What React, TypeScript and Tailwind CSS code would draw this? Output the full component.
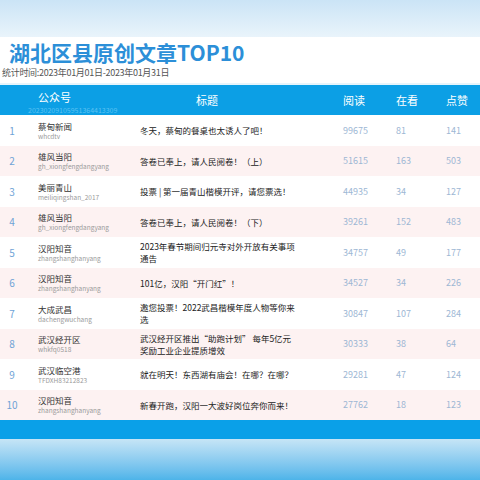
const rows = [
  { name: '蔡甸新闻', id: 'whcdtv', title: '冬天，蔡甸的餐桌也太诱人了吧！', read: 99675, seen: 81, like: 141 },
  { name: '雄风当阳', id: 'gh_xiongfengdangyang', title: '答卷已奉上，请人民阅卷！（上）', read: 51615, seen: 163, like: 503 },
  { name: '美丽青山', id: 'meiliqingshan_2017', title: '投票 | 第一届青山楷模开评，请您票选！', read: 44935, seen: 34, like: 127 },
  { name: '雄风当阳', id: 'gh_xiongfengdangyang', title: '答卷已奉上，请人民阅卷！（下）', read: 39261, seen: 152, like: 483 },
  { name: '汉阳知音', id: 'zhangshanghanyang', title: '2023年春节期间归元寺对外开放有关事项通告', read: 34757, seen: 49, like: 177 },
  { name: '汉阳知音', id: 'zhangshanghanyang', title: '101亿，汉阳“开门红”！', read: 34527, seen: 34, like: 226 },
  { name: '大成武昌', id: 'dachengwuchang', title: '邀您投票！2022武昌楷模年度人物等你来选', read: 30847, seen: 107, like: 284 },
  { name: '武汉经开区', id: 'whkfq0518', title: '武汉经开区推出“助跑计划” 每年5亿元奖励工业企业提质增效', read: 30333, seen: 38, like: 64 },
  { name: '武汉临空港', id: 'TFDXH83212823', title: '就在明天！东西湖有庙会！在哪？在哪？', read: 29281, seen: 47, like: 124 },
  { name: '汉阳知音', id: 'zhangshanghanyang', title: '新春开跑，汉阳一大波好岗位奔你而来！', read: 27762, seen: 18, like: 123 },
];

export default function App() {
  return (
    <div className="flex h-[480px] w-[480px] flex-col overflow-hidden bg-white font-['Noto_Sans_CJK_SC','Noto_Sans',sans-serif]">
      <div className="h-[37px] shrink-0 bg-gradient-to-b from-[#cbe4f6] to-[#e9f4fb]" />
      <h1 className="mt-[3px] pl-[9px] text-[21px] font-bold leading-[24px] text-[#2c8fd8]">
        湖北区县原创文章TOP10
      </h1>
      <p className="mt-[3px] pl-[2px] text-[9px] leading-[12px] tracking-[-0.3px] text-[#555]">
        统计时间:2023年01月01日-2023年01月31日
      </p>
      <div className="mt-[4px] h-[2px] shrink-0 bg-[#e6f4fb]" />
      <div className="grid h-[30px] shrink-0 grid-cols-[38px_102px_203px_53px_50px_1fr] items-center bg-[#0c9fe5] text-[11px] text-white">
        <div />
        <div className="relative h-full">
          <span className="absolute left-[0px] top-[5px] leading-[14px]">公众号</span>
          <span className="absolute left-[-10px] top-[21px] whitespace-nowrap text-[7px] leading-[8px] text-[#5cc2f2]">
            20230209105951364413309
          </span>
        </div>
        <div className="pl-[56px] leading-[14px]">标题</div>
        <div className="leading-[14px]">阅读</div>
        <div className="leading-[14px]">在看</div>
        <div className="leading-[14px]">点赞</div>
      </div>
      {rows.map((r, i) => (
        <div
          key={i}
          className={`grid h-[30.5px] shrink-0 grid-cols-[24px_14px_102px_203px_53px_50px_1fr] items-center ${
            i % 2 === 1 ? 'bg-[#fdf2f2]' : 'bg-white'
          }`}
        >
          <div className="text-center text-[10px] text-[#6fa3d6]">{i + 1}</div>
          <div />
          <div className="flex flex-col">
            <span className="text-[8.5px] leading-[12px] text-[#333]">{r.name}</span>
            <span className="text-[6.5px] leading-[9px] text-[#9a9a9a]">{r.id}</span>
          </div>
          <div className="pr-[46px] text-[8.5px] leading-[12px] text-[#222]">{r.title}</div>
          <div className="text-[9px] text-[#9db7d4]">{r.read}</div>
          <div className="text-[9px] text-[#9db7d4]">{r.seen}</div>
          <div className="text-[9px] text-[#9db7d4]">{r.like}</div>
        </div>
      ))}
      <div className="h-[19px] shrink-0 bg-[#0aa0e8]" />
      <div className="flex-1 bg-gradient-to-b from-[#c6e5f6] to-[#4db4e9]" />
    </div>
  );
}
